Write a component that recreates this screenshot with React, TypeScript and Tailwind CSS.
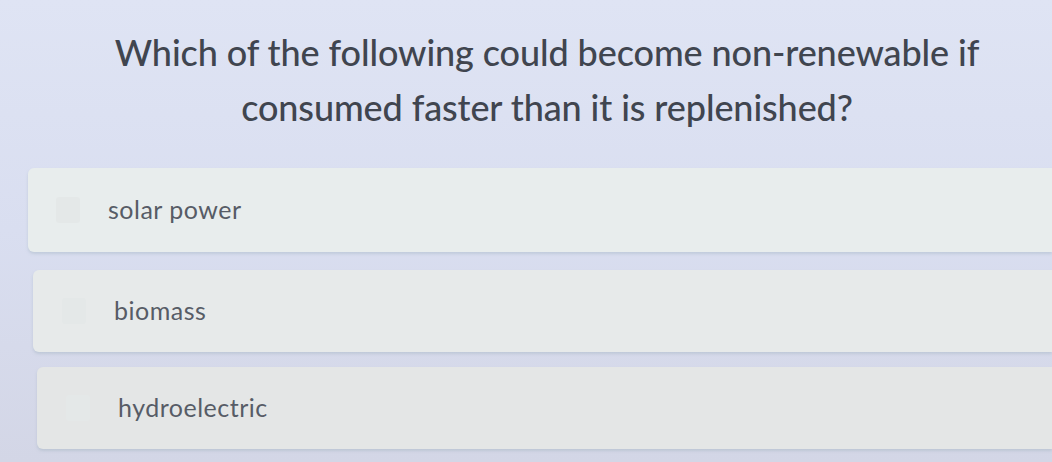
import React from "react";

const options = [
  { label: "solar power", card: "ml-[28px] h-[84px] bg-[#e8eded]", pad: "pl-[80px]", mark: "ml-[-52px]" },
  { label: "biomass", card: "ml-[33px] h-[82px] bg-[#e7eaea]", pad: "pl-[79px]", mark: "ml-[-50px]" },
  { label: "hydroelectric", card: "ml-[37px] h-[82px] bg-[#e4e6e6]", pad: "pl-[77px]", mark: "ml-[-48px]" },
];

export default function App() {
  return (
    <div
      className="w-[1052px] h-[462px] overflow-hidden bg-gradient-to-b from-[#dfe4f4] via-[#d9def0] to-[#d3d6e6] flex flex-col"
      style={{ fontFamily: "Lato, 'Open Sans', sans-serif" }}
    >
      <div className="pt-[25px] pl-[42px] text-center text-[#40454f] text-[36px] leading-[55px] font-medium tracking-[-0.1px]">
        <p>Which of the following could become non-renewable if</p>
        <p>consumed faster than it is replenished?</p>
      </div>

      <div className="mt-[33px] flex flex-col">
        {options.map((o, i) => (
          <div
            key={o.label}
            className={`${o.card} rounded-l-[6px] flex items-center ${o.pad} ${
              i === 0 ? "" : i === 1 ? "mt-[18px]" : "mt-[15px]"
            } shadow-[0_2px_3px_rgba(150,170,180,0.35)]`}
          >
            <span className={`${o.mark} mr-[28px] w-[24px] h-[26px] rounded-[3px] bg-[#e4e8e8]`} />
            <span className="text-[25px] text-[#575c66] tracking-[0.5px]">{o.label}</span>
          </div>
        ))}
      </div>
    </div>
  );
}
